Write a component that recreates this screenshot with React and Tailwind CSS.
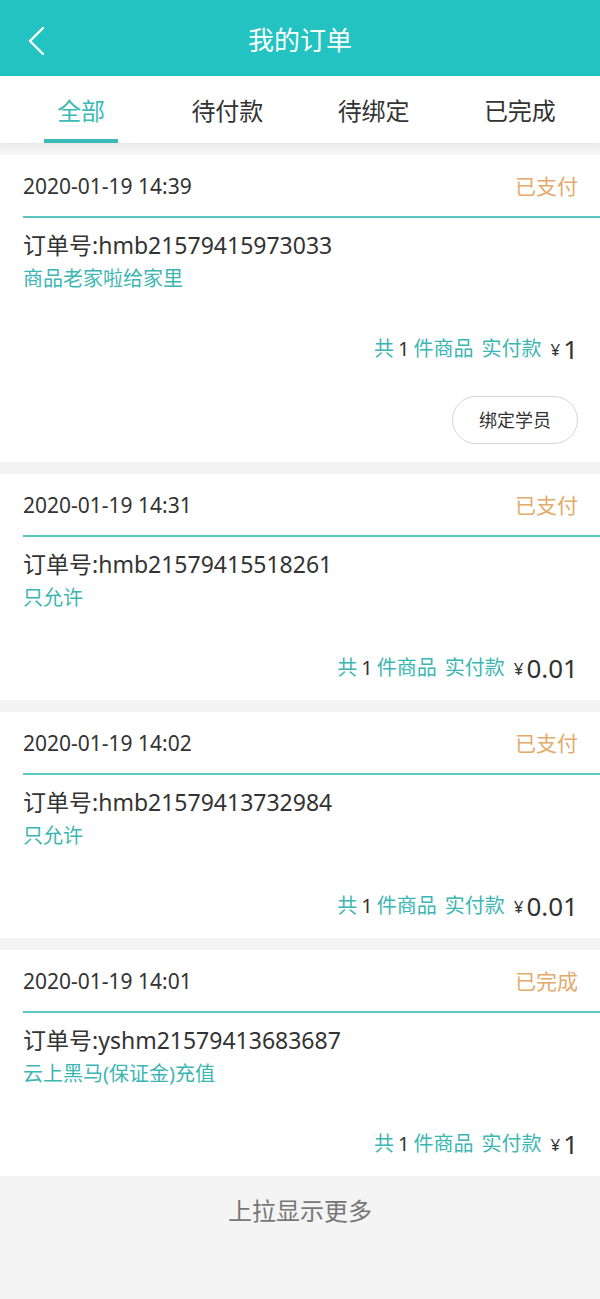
const FONT = { fontFamily: '"Noto Sans", "Noto Sans CJK SC", sans-serif' }

const TABS = ['全部', '待付款', '待绑定', '已完成']

const ORDERS = [
  { time: '2020-01-19 14:39', status: '已支付', no: 'hmb21579415973033', name: '商品老家啦给家里', count: 1, price: '1', bind: true },
  { time: '2020-01-19 14:31', status: '已支付', no: 'hmb21579415518261', name: '只允许', count: 1, price: '0.01' },
  { time: '2020-01-19 14:02', status: '已支付', no: 'hmb21579413732984', name: '只允许', count: 1, price: '0.01' },
  { time: '2020-01-19 14:01', status: '已完成', no: 'yshm21579413683687', name: '云上黑马(保证金)充值', count: 1, price: '1' },
]

function Header() {
  return (
    <div className="relative flex h-[76px] items-center justify-center bg-[#22c3c1]">
      <svg className="absolute left-[26px] top-[26px] h-[30px] w-[20px]" viewBox="0 0 20 30" fill="none">
        <path d="M17 2 L4 15 L17 28" stroke="white" strokeWidth="2.4" strokeLinecap="round" strokeLinejoin="round" />
      </svg>
      <h1 className="pt-[3px] text-[26px] leading-none text-white">我的订单</h1>
    </div>
  )
}

function Tabs() {
  return (
    <div className="relative z-10 grid h-[67px] grid-cols-4 bg-white pl-[8px] pr-[7px] shadow-[0_3px_6px_rgba(0,0,0,0.06)]">
      {TABS.map((tab, i) => (
        <div key={tab} className="relative flex items-center justify-center pt-[2px]">
          <span className={`text-[24px] leading-none ${i === 0 ? 'text-[#3cbab6]' : 'text-[#333]'}`}>{tab}</span>
          {i === 0 ? <span className="absolute bottom-0 left-1/2 h-[4px] w-[74px] -translate-x-1/2 bg-[#3cbab6]" /> : null}
        </div>
      ))}
    </div>
  )
}

function OrderCard({ order }) {
  return (
    <div className="bg-white pl-[23px]">
      <div className="flex h-[63px] items-center justify-between border-b-2 border-[#5cc6c3] pr-[22px] pt-[2px]">
        <span className="text-[21px] text-[#333]">{order.time}</span>
        <span className="text-[21px] text-[#e3aa6c]">{order.status}</span>
      </div>
      <div className="pt-[12px] pr-[22px]">
        <p className="h-[30px] text-[23px] leading-[30px] text-[#333]">订单号:{order.no}</p>
        <p className="mt-[2px] h-[34px] text-[20px] leading-[34px] text-[#3cb6b2]">{order.name}</p>
        <div className="mt-[35px] flex h-[36px] items-center justify-end text-[20px] leading-none">
          <span className="text-[#3cb6b2]">共</span>
          <span className="mx-[4px] text-[#333]">{order.count}</span>
          <span className="text-[#3cb6b2]">件商品</span>
          <span className="ml-[8px] text-[#3cb6b2]">实付款</span>
          <span className="ml-[9px] text-[17px] text-[#333]">¥</span>
          <span className="ml-[3px] text-[26px] text-[#333]">{order.price}</span>
        </div>
        {order.bind ? (
          <div className="mt-[29px] flex justify-end pb-[18px]">
            <button type="button" className="h-[48px] w-[126px] rounded-full border border-[#d6d6d6] text-[18px] text-[#333]">绑定学员</button>
          </div>
        ) : (
          <div className="h-[14px]" />
        )}
      </div>
    </div>
  )
}

export default function App() {
  return (
    <div className="flex min-h-[1299px] flex-col bg-[#f4f4f4]" style={FONT}>
      <Header />
      <Tabs />
      <div className="flex flex-col gap-[12px] pt-[12px]">
        {ORDERS.map(order => <OrderCard key={order.no} order={order} />)}
      </div>
      <div className="flex h-[70px] items-center justify-center">
        <span className="text-[24px] text-[#777]">上拉显示更多</span>
      </div>
    </div>
  )
}
